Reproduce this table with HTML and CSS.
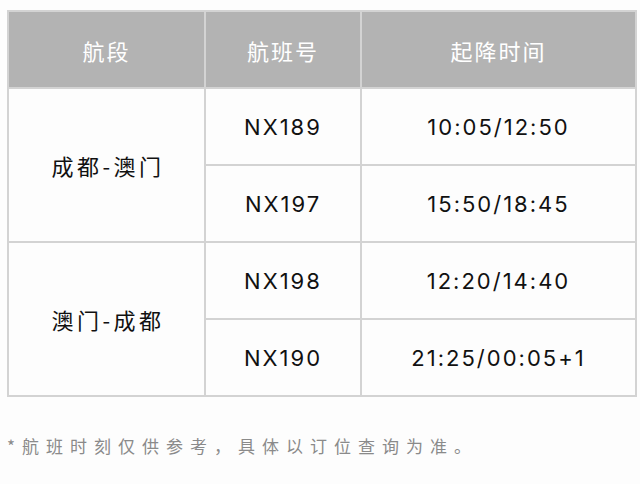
FILE: index.html
```html
<!DOCTYPE html>
<html lang="zh-CN">
<head>
<meta charset="utf-8">
<link rel="stylesheet" href="styles.css">
</head>
<body>
<div class="page">
  <table class="sched">
    <colgroup>
      <col class="c1"><col class="c2"><col class="c3">
    </colgroup>
    <thead>
      <tr><th>航段</th><th>航班号</th><th>起降时间</th></tr>
    </thead>
    <tbody>
      <tr><td rowspan="2" class="route">成都-澳门</td><td>NX189</td><td>10:05/12:50</td></tr>
      <tr><td>NX197</td><td>15:50/18:45</td></tr>
      <tr><td rowspan="2" class="route">澳门-成都</td><td>NX198</td><td>12:20/14:40</td></tr>
      <tr><td>NX190</td><td>21:25/00:05+1</td></tr>
    </tbody>
  </table>
  <p class="note">*航班时刻仅供参考，具体以订位查询为准。</p>
</div>
</body>
</html>
```
FILE: styles.css
```css
html, body {
  margin: 0;
  padding: 0;
  background: #fdfdfd;
}
.page {
  padding: 10px 0 0 7px;
  font-family: Inter, "Noto Sans CJK SC", sans-serif;
}
.sched {
  border-collapse: collapse;
  table-layout: fixed;
  width: 628px;
}
.c1 { width: 197px; }
.c2 { width: 156px; }
.c3 { width: 275px; }
.sched th, .sched td {
  border: 2px solid #d3d3d3;
  text-align: center;
  vertical-align: middle;
  padding: 0;
  height: 75px;
}
.sched th {
  background: #b3b3b3;
  color: #ffffff;
  font-weight: normal;
  font-size: 22px;
  letter-spacing: 2px;
  font-family: "Noto Sans CJK SC", sans-serif;
}
.sched td {
  color: #111111;
  font-size: 22px;
  letter-spacing: 2px;
  background: #fdfdfd;
}
.sched td.route {
  font-family: "Noto Sans CJK SC", sans-serif;
  letter-spacing: 3.5px;
  padding-left: 3px;
}
.note {
  margin: 36px 0 0 0;
  color: #8a8a8a;
  font-family: "Noto Sans CJK SC", sans-serif;
  font-size: 17px;
  letter-spacing: 7px;
}
```
